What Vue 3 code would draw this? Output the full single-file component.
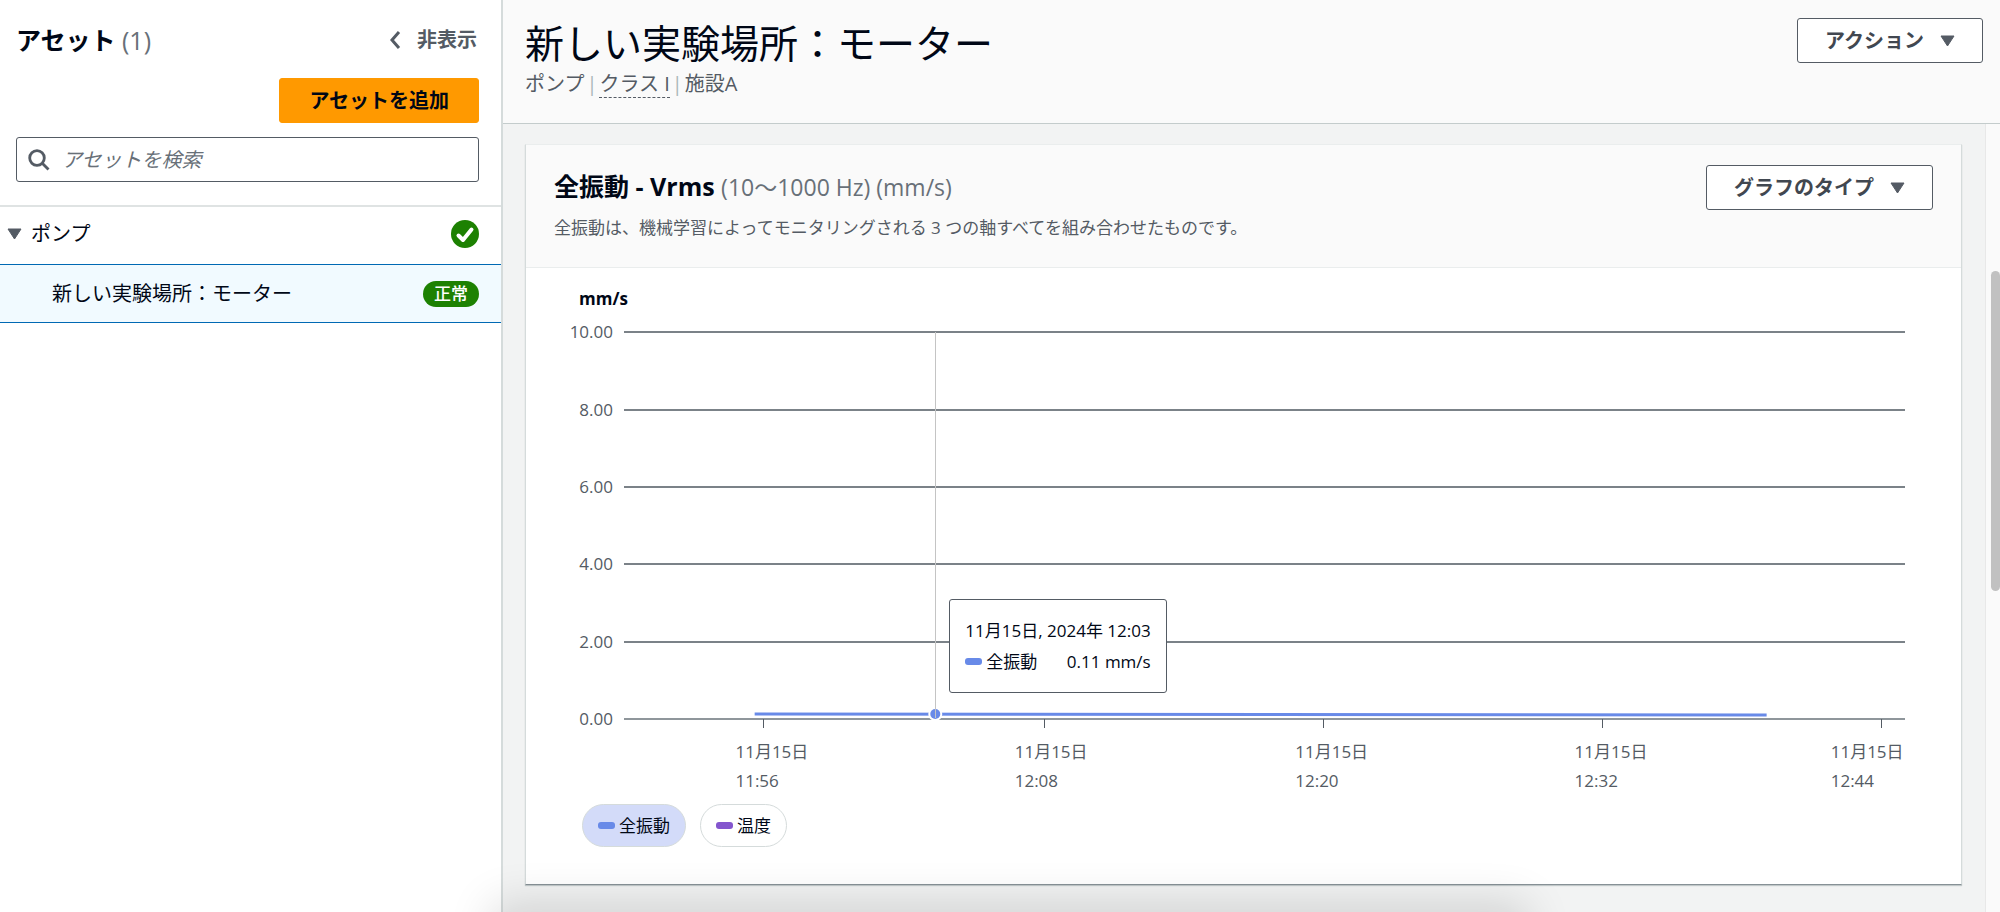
<script setup>
import { ref } from 'vue'

const query = ref('')

const gridRows = [
  { label: '10.00', y: 16 },
  { label: '8.00', y: 94 },
  { label: '6.00', y: 171 },
  { label: '4.00', y: 248 },
  { label: '2.00', y: 326 },
]
const axisY = 403

const ticks = [
  { time: '11:56', tick: 10.9, label: 8.7 },
  { time: '12:08', tick: 32.8, label: 30.5 },
  { time: '12:20', tick: 54.6, label: 52.4 },
  { time: '12:32', tick: 76.4, label: 74.2 },
  { time: '12:44', tick: 98.2, label: 94.2 },
]
</script>

<template>
  <div class="app">
    <aside class="sidebar">
      <div class="sidebar-head">
        <div class="title-row">
          <h2 class="side-title">アセット <span class="muted">(1)</span></h2>
          <button class="hide-btn" type="button">
            <svg width="12" height="20" viewBox="0 0 12 20" aria-hidden="true">
              <path d="M10 2 L3 10 L10 18" fill="none" stroke="#545b64" stroke-width="3" />
            </svg>
            非表示
          </button>
        </div>
        <button class="btn primary" type="button">アセットを追加</button>
        <label class="search">
          <svg width="22" height="22" viewBox="0 0 22 22" aria-hidden="true">
            <circle cx="9" cy="9" r="7.3" fill="none" stroke="#545b64" stroke-width="2.8" />
            <path d="M14 14 L20.5 20.5" stroke="#545b64" stroke-width="2.8" />
          </svg>
          <input v-model="query" type="search" aria-label="アセットを検索" placeholder="アセットを検索" />
        </label>
      </div>
      <ul class="tree">
        <li class="row parent">
          <button class="toggle" type="button">
            <svg width="15" height="12" viewBox="0 0 15 12" aria-hidden="true">
              <path d="M1 1 H14 L7.500 11 Z" fill="#545b64" stroke="#545b64" stroke-linejoin="round" />
            </svg>
            ポンプ
          </button>
          <svg class="ok" width="28" height="28" viewBox="0 0 28 28" role="img" aria-label="正常">
            <circle cx="14" cy="14" r="14" fill="#1d8102" />
            <path d="M7.500 15.500 L12 20 L20.500 9.500" fill="none" stroke="#fff" stroke-width="4" stroke-linecap="round" stroke-linejoin="round" />
          </svg>
        </li>
        <li class="row selected">
          <a class="asset-link" href="#">新しい実験場所：モーター</a>
          <span class="badge">正常</span>
        </li>
      </ul>
    </aside>

    <main class="main">
      <header class="page-head">
        <div>
          <h1>新しい実験場所：モーター</h1>
          <div class="meta">
            <span>ポンプ</span>
            <span class="sep">|</span>
            <a class="class-link" href="#">クラス I</a>
            <span class="sep">|</span>
            <span>施設A</span>
          </div>
        </div>
        <button class="btn" type="button">
          アクション
          <svg width="15" height="12" viewBox="0 0 15 12" aria-hidden="true">
            <path d="M1 1 H14 L7.500 11 Z" fill="#545b64" stroke="#545b64" stroke-linejoin="round" />
          </svg>
        </button>
      </header>

      <div class="body">
        <div class="content">
          <section class="card">
            <div class="card-head">
              <div>
                <h2 class="card-title">全振動 - Vrms <span class="muted range">(10〜1000 Hz) (mm/s)</span></h2>
                <p class="desc">全振動は、機械学習によってモニタリングされる 3 つの軸すべてを組み合わせたものです。</p>
              </div>
              <button class="btn" type="button">
                グラフのタイプ
                <svg width="15" height="12" viewBox="0 0 15 12" aria-hidden="true">
                  <path d="M1 1 H14 L7.500 11 Z" fill="#545b64" stroke="#545b64" stroke-linejoin="round" />
                </svg>
              </button>
            </div>

            <div class="card-body">
              <div class="unit">mm/s</div>
              <div class="chart">
                <svg class="y-axis" aria-hidden="true">
                  <text v-for="r in gridRows" :key="r.label" x="100%" :y="r.y + 6" text-anchor="end">{{ r.label }}</text>
                  <text x="100%" :y="axisY + 6" text-anchor="end">0.00</text>
                </svg>
                <div class="plot-wrap">
                  <svg class="plot" role="img" aria-label="全振動">
                    <line v-for="r in gridRows" :key="r.label" class="grid" x1="0" x2="100%" :y1="r.y" :y2="r.y" />
                    <line class="axis" x1="0" x2="100%" :y1="axisY" :y2="axisY" />
                    <g v-for="t in ticks" :key="t.time">
                      <line class="tick" :x1="t.tick + '%'" :x2="t.tick + '%'" :y1="axisY" :y2="axisY + 9" />
                      <text :x="t.label + '%'" :y="axisY + 39">11月15日</text>
                      <text :x="t.label + '%'" :y="axisY + 68">{{ t.time }}</text>
                    </g>
                    <line class="series" x1="10.2%" x2="89.2%" y1="398" y2="399" />
                    <circle cx="24.3%" cy="398" r="7" fill="#fff" />
                    <circle cx="24.3%" cy="398" r="5" fill="#688ae8" />
                    <line class="cursor" x1="24.3%" x2="24.3%" y1="16" y2="402" />
                  </svg>
                  <div class="tooltip">
                    <div>11月15日, 2024年 12:03</div>
                    <div class="tip-row">
                      <span class="marker blue"></span>
                      <span>全振動</span>
                      <span class="tip-value">0.11 mm/s</span>
                    </div>
                  </div>
                </div>
              </div>
              <div class="legend">
                <button class="pill active" type="button"><span class="marker blue"></span>全振動</button>
                <button class="pill" type="button"><span class="marker purple"></span>温度</button>
              </div>
            </div>
          </section>
        </div>
        <div class="scroll-track"><div class="scroll-thumb"></div></div>
      </div>
    </main>
    <div class="edge-shadow"></div>
  </div>
</template>

<style>
html,
body {
  margin: 0;
  overflow: hidden;
}
</style>

<style scoped>
* {
  box-sizing: border-box;
}
.app {
  position: relative;
  display: flex;
  height: 100vh;
  overflow: hidden;
  background: #fff;
  color: #000716;
  font-family: "Open Sans", "Noto Sans CJK JP", sans-serif;
  font-size: 20px;
  line-height: 28px;
}
button,
input {
  font: inherit;
  color: inherit;
}
h1,
h2,
p,
ul {
  margin: 0;
  padding: 0;
}
a {
  color: inherit;
  text-decoration: none;
}
.muted {
  font-weight: 400;
  color: #687078;
}

.sidebar {
  flex: 0 0 503px;
  border-right: 2px solid #d5dbdb;
}
.sidebar-head {
  display: flex;
  flex-direction: column;
  align-items: flex-end;
  padding: 22px 22px 23px 16px;
}
.title-row {
  display: flex;
  align-items: center;
  justify-content: space-between;
  width: 100%;
  height: 36px;
  margin-bottom: 20px;
}
.side-title {
  font-size: 25px;
  line-height: 36px;
}
.hide-btn {
  display: flex;
  align-items: center;
  gap: 16px;
  padding: 0 2px 0 0;
  border: 0;
  background: none;
  color: #545b64;
  font-weight: 700;
}
.btn {
  display: flex;
  align-items: center;
  gap: 16px;
  height: 45px;
  padding: 0 27px;
  border: 1px solid #545b64;
  border-radius: 3px;
  background: #fff;
  color: #414750;
  font-weight: 700;
  white-space: nowrap;
}
.primary {
  padding: 0 29px;
  border-color: #ff9900;
  background: #ff9900;
  color: #000716;
}
.search {
  display: flex;
  align-items: center;
  gap: 12px;
  width: 100%;
  height: 45px;
  margin-top: 14px;
  padding: 0 11px;
  border: 1px solid #545b64;
  border-radius: 3px;
}
.search input {
  flex: 1;
  min-width: 0;
  padding: 0;
  border: 0;
  outline: 0;
  background: none;
}
.search input::placeholder {
  color: #687078;
  font-style: italic;
  opacity: 1;
}

.tree {
  list-style: none;
}
.row {
  display: flex;
  align-items: center;
  justify-content: space-between;
  height: 59px;
  padding-right: 22px;
}
.parent {
  padding-bottom: 4px;
  padding-left: 7px;
  border-top: 2px solid #dfe3e3;
}
.toggle {
  display: flex;
  align-items: center;
  gap: 9px;
  padding: 0;
  border: 0;
  background: none;
}
.selected {
  padding-left: 52px;
  border-top: 1px solid #0069b4;
  border-bottom: 1px solid #0069b4;
  background: #f1faff;
}
.badge {
  padding: 0 11px;
  border-radius: 13px;
  background: #1d8102;
  color: #fff;
  font-size: 17px;
  font-weight: 500;
  line-height: 26px;
}

.main {
  display: flex;
  flex: 1;
  flex-direction: column;
  min-width: 0;
}
.page-head {
  display: flex;
  align-items: flex-start;
  justify-content: space-between;
  flex: 0 0 124px;
  padding: 18px 17px 0 22px;
  border-bottom: 1px solid #c4cccc;
  background: #fafafa;
}
h1 {
  font-size: 39px;
  font-weight: 400;
  line-height: 50px;
}
.meta {
  display: flex;
  gap: 2px;
  margin-top: 2px;
  color: #545b64;
}
.sep {
  color: #aab7b8;
}
.class-link {
  border-bottom: 1px dashed #545b64;
  line-height: 27px;
}
.body {
  display: flex;
  flex: 1;
  min-height: 0;
  background: #f2f3f3;
}
.content {
  flex: 1;
  min-width: 0;
  padding: 20px 23px 28px 22px;
}
.scroll-track {
  flex: 0 0 15px;
  padding: 147px 0 0 5px;
  border-left: 1px solid #e8e8e8;
  background: #fafafa;
}
.scroll-thumb {
  height: 320px;
  border-radius: 5px;
  background: #c1c1c1;
}

.card {
  border: 1px solid #d5dbdb;
  border-top-color: #eaeded;
  border-bottom-color: #879196;
  background: #fff;
  box-shadow: 0 1px 1px rgba(0, 28, 36, 0.2);
}
.card-head {
  display: flex;
  align-items: flex-start;
  justify-content: space-between;
  padding: 20px 28px 22px;
  border-bottom: 1px solid #eaeded;
  background: #fafafa;
}
.card-title {
  font-size: 25px;
  line-height: 42px;
}
.range {
  font-size: 23px;
}
.desc {
  margin-top: 8px;
  padding-bottom: 5px;
  color: #545b64;
  font-size: 17px;
  line-height: 24px;
}
.card-body {
  padding: 18px 56px 37px 53px;
  font-size: 17px;
}
.unit {
  font-weight: 700;
  line-height: 25px;
  margin-bottom: 5px;
}
.chart {
  display: flex;
  gap: 11px;
  height: 488px;
}
.chart text {
  fill: #545b64;
  font-size: 17px;
}
.y-axis {
  flex: 0 0 46px;
  height: 480px;
  margin-left: -12px;
}
.plot-wrap {
  position: relative;
  flex: 1;
  min-width: 0;
}
.plot {
  display: block;
  width: 100%;
  height: 480px;
  overflow: visible;
}
.grid {
  stroke: #7b8288;
  stroke-width: 2;
}
.axis {
  stroke: #8f969b;
  stroke-width: 2;
}
.tick {
  stroke: #545b64;
  stroke-width: 1;
  shape-rendering: crispEdges;
}
.series {
  stroke: #688ae8;
  stroke-width: 3;
}
.cursor {
  stroke: #c4c4c4;
  stroke-width: 1;
  shape-rendering: crispEdges;
}
.tooltip {
  position: absolute;
  top: 283px;
  left: 25.400%;
  padding: 15px;
  border: 1px solid #545b64;
  border-radius: 3px;
  background: #fff;
  line-height: 31px;
  white-space: nowrap;
}
.tip-row {
  display: flex;
  align-items: center;
  gap: 4px;
}
.tip-value {
  margin-left: auto;
}
.marker {
  width: 17px;
  height: 7px;
  border-radius: 3px;
}
.blue {
  background: #688ae8;
}
.purple {
  background: #8456ce;
}
.legend {
  display: flex;
  gap: 14px;
  margin-left: 3px;
}
.pill {
  display: flex;
  align-items: center;
  gap: 4px;
  height: 43px;
  padding: 0 15px;
  border: 1px solid #d5dbdb;
  border-radius: 22px;
  background: #fff;
}
.active {
  background: #d3dbf9;
}
.edge-shadow {
  position: absolute;
  top: 100%;
  left: 25%;
  right: 24%;
  height: 60px;
  box-shadow: 0 0 45px 8px rgba(0, 0, 0, 0.14);
  pointer-events: none;
}
</style>
